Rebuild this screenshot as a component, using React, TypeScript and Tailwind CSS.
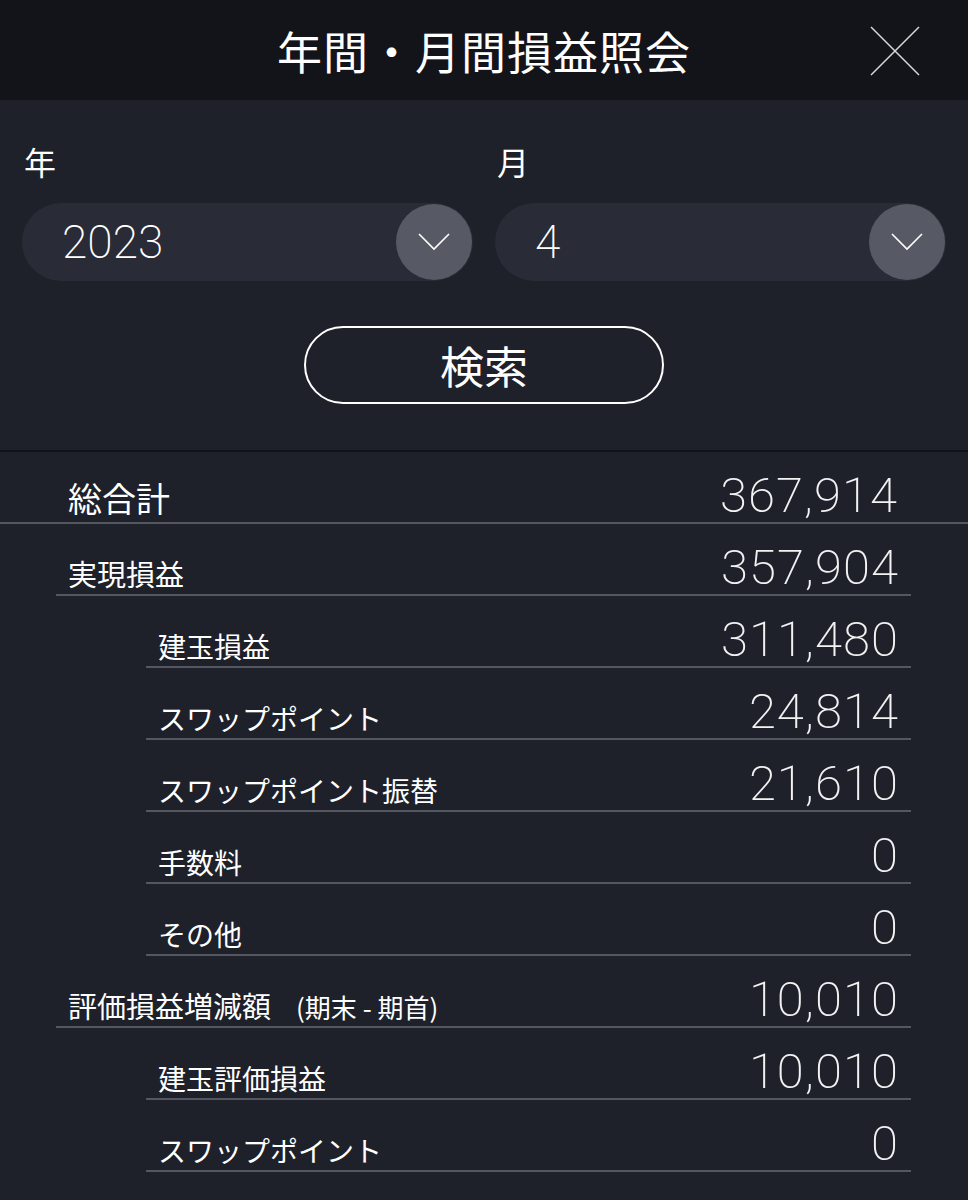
import { Fragment } from 'react';

const jp = { fontFamily: '"Noto Sans CJK JP", "Noto Sans", sans-serif' };
const num = { fontFamily: 'Roboto, "Liberation Sans", sans-serif' };

type Row = { label: string; value: string; level: 1 | 2; note?: string };

const rows: Row[] = [
  { label: '実現損益', value: '357,904', level: 1 },
  { label: '建玉損益', value: '311,480', level: 2 },
  { label: 'スワップポイント', value: '24,814', level: 2 },
  { label: 'スワップポイント振替', value: '21,610', level: 2 },
  { label: '手数料', value: '0', level: 2 },
  { label: 'その他', value: '0', level: 2 },
  { label: '評価損益増減額', note: '(期末 - 期首)', value: '10,010', level: 1 },
  { label: '建玉評価損益', value: '10,010', level: 2 },
  { label: 'スワップポイント', value: '0', level: 2 },
];

function Chevron() {
  return (
    <span className="grid h-[76px] w-[76px] place-items-center rounded-full bg-[#575a64]">
      <svg width="32" height="18" viewBox="0 0 32 18" fill="none">
        <path d="M1 1 L16 16 L31 1" stroke="#ffffff" strokeWidth="1.6" />
      </svg>
    </span>
  );
}

function Select({ label, value }: { label: string; value: string }) {
  return (
    <div className="flex-1">
      <div className="pl-[2px] text-[32px] leading-none text-white" style={jp}>
        {label}
      </div>
      <div className="mt-[26px] flex h-[78px] items-center justify-between rounded-full bg-[#292b37] pl-[40px] pr-[1px]">
        <span className="text-[46px] font-[200] leading-none text-white" style={num}>
          {value}
        </span>
        <Chevron />
      </div>
    </div>
  );
}

export default function App() {
  return (
    <div className="min-h-[1200px] w-[968px] bg-[#1e202a] text-white">
      {/* header */}
      <header className="relative flex h-[100px] items-center justify-center bg-[#131419]">
        <h1 className="text-[45px] font-normal leading-none tracking-[1px]" style={jp}>
          年間・月間損益照会
        </h1>
        <svg className="absolute right-[48px] top-[26px]" width="50" height="50" viewBox="0 0 50 50">
          <path d="M1 1 L49 49 M49 1 L1 49" stroke="#d8d8d8" strokeWidth="1.5" />
        </svg>
      </header>

      {/* search form */}
      <div className="flex gap-[22px] px-[22px] pt-[45px]">
        <Select label="年" value="2023" />
        <Select label="月" value="4" />
      </div>
      <div className="mt-[45px] flex justify-center">
        <button
          className="h-[78px] w-[360px] rounded-full border-2 border-white text-[44px] leading-none text-white"
          style={jp}
        >
          検索
        </button>
      </div>
      <div className="mt-[46px] h-[2px] bg-[#121318]" />

      {/* totals */}
      <div className="flex h-[72px] items-end justify-between border-b-2 border-[#54575f] pb-[2px] pl-[68px] pr-[70px]">
        <span className="pb-[5px] text-[34px] leading-none" style={jp}>
          総合計
        </span>
        <span className="text-[49px] font-[200] leading-none tracking-[1px] text-[#f2f2f2]" style={num}>
          367,914
        </span>
      </div>
      <div className="pl-[56px] pr-[57px]">
        {rows.map((r, i) => (
          <Fragment key={i}>
            <div
              className={
                'flex h-[72px] items-end justify-between border-b-2 border-[#54575f] pb-[2px] pl-[12px] pr-[12px] ' +
                (r.level === 2 ? 'ml-[90px]' : '')
              }
            >
              <span
                className={
                  'flex items-end pb-[4px] leading-none ' + (r.level === 1 ? 'text-[29px]' : 'text-[28px]')
                }
                style={jp}
              >
                {r.label}
                {r.note && <span className="ml-[25px] text-[26px] leading-none">{r.note}</span>}
              </span>
              <span className="text-[49px] font-[200] leading-none tracking-[1px] text-[#f2f2f2]" style={num}>
                {r.value}
              </span>
            </div>
          </Fragment>
        ))}
      </div>
    </div>
  );
}
